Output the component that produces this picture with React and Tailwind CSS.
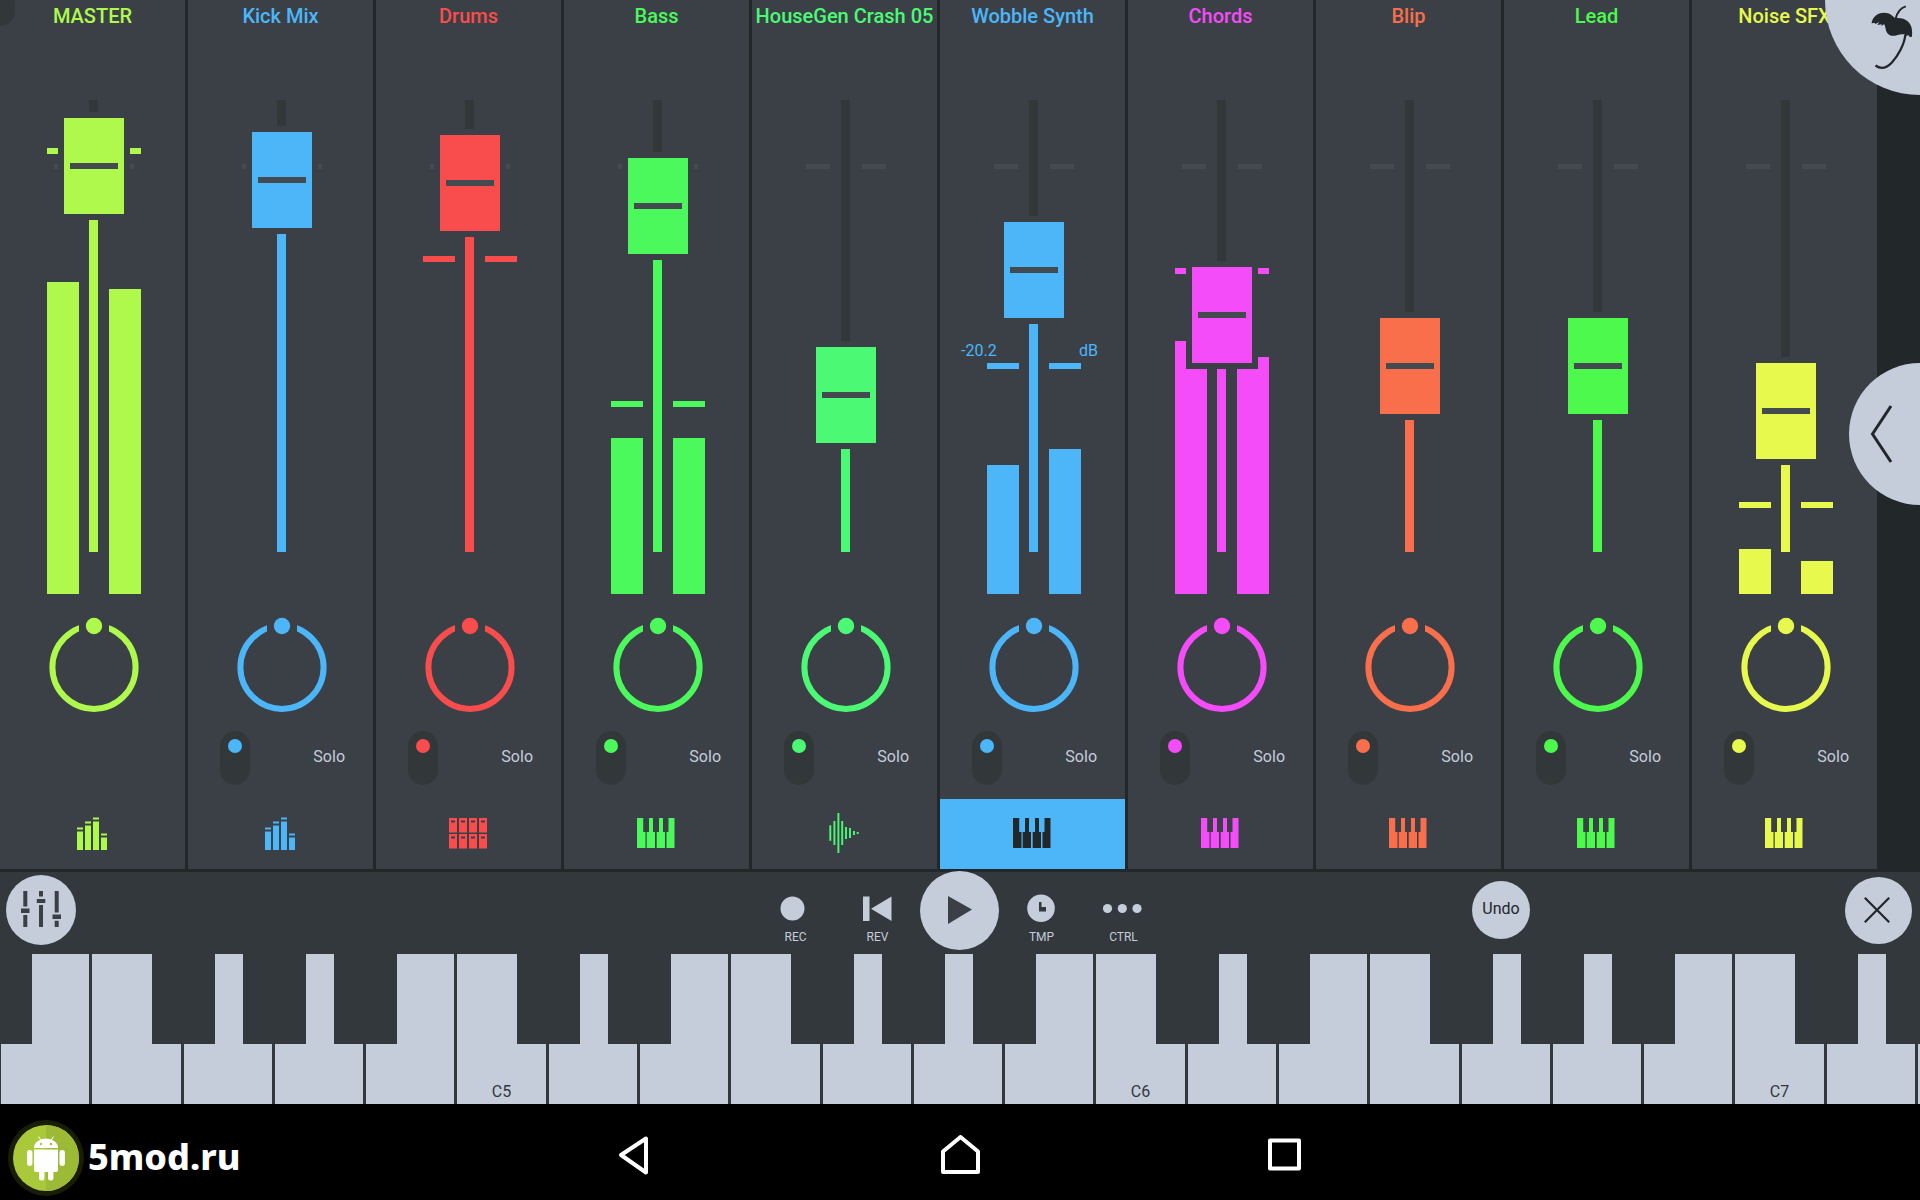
import React, { useState } from "react";

// level = fader position, peak = top of the peak marker, meters = bar heights (all in px of the fader area)
const CHANNELS = [
  { name: "MASTER", color: "text-[#aef94c]", icon: "bars", level: 386, peak: 48, meters: [312, 305], master: true },
  { name: "Kick Mix", color: "text-[#4cb6f9]", icon: "bars", level: 372 },
  { name: "Drums", color: "text-[#f94c4c]", icon: "pads", level: 369, peak: 156 },
  { name: "Bass", color: "text-[#4cf95c]", icon: "keys", level: 346, peak: 301, meters: [156, 156] },
  { name: "HouseGen Crash 05", color: "text-[#4cf975]", icon: "wave", level: 157 },
  { name: "Wobble Synth", color: "text-[#4cb6f9]", icon: "keys", level: 282, peak: 263, meters: [129, 145], db: "-20.2" },
  { name: "Chords", color: "text-[#f44cf9]", icon: "keys", level: 237, peak: 168, meters: [253, 237] },
  { name: "Blip", color: "text-[#f96f4c]", icon: "keys", level: 186 },
  { name: "Lead", color: "text-[#4cf94c]", icon: "keys", level: 186 },
  { name: "Noise SFX", color: "text-[#e6f94c]", icon: "keys", level: 141, peak: 402, meters: [45, 33] },
];

const NOTES = ["C", "D", "E", "F", "G", "A", "B"];
// E4 up to D7
const WHITE_KEYS = Array.from({ length: 21 }, (_, i) => {
  const n = i + 2;
  return { note: NOTES[n % 7], octave: 4 + Math.floor(n / 7) };
});

export default function App() {
  const [selected, setSelected] = useState("Wobble Synth");

  return (
    <div className="relative min-h-screen overflow-hidden bg-black font-[Roboto,sans-serif] text-base text-[#c5ccda]">
      <main className="relative">
        <section className="grid grid-cols-10 gap-[3px] bg-[#22272a] pr-[43px] pb-[3px]">
          {CHANNELS.map((c) => (
            <Strip key={c.name} channel={c} selected={selected === c.name} onSelect={() => setSelected(c.name)} />
          ))}
        </section>
        <div className="absolute top-0 left-0 h-[26px] w-[15px] rounded-br-full bg-[#32383a]" />
        <button aria-label="Main menu" className="absolute top-0 right-0 size-[95px] rounded-bl-full bg-[#c5ccda] text-[#22272a]">
          <PalmLogo />
        </button>
        <button aria-label="Open panel" className="absolute top-[363px] right-0 flex h-[142px] w-[71px] items-center rounded-l-full bg-[#c5ccda] pl-[21px] text-[#22272a]">
          <svg width="24" height="60" viewBox="0 0 24 60" fill="none" stroke="currentColor" strokeWidth="3"><path d="M21 2 2.500 30 21 58" /></svg>
        </button>
      </main>
      <Transport />
      <Keyboard />
      <SystemBar />
    </div>
  );
}

function Strip({ channel, selected, onSelect }) {
  const { name, color, icon, master } = channel;
  return (
    <article className={`flex min-w-0 flex-col bg-[#3b4047] ${color}`}>
      <h2 className="h-[100px] pt-0.5 text-center text-xl leading-7 font-medium whitespace-nowrap">{name}</h2>
      <div className="flex flex-col items-center pl-[3px]">
        <Fader channel={channel} />
        <Knob name={name} />
      </div>
      <div className="mt-[17px] flex h-[54px] items-center justify-between pr-7 pl-8">
        {!master && (
          <>
            <input
              type="checkbox"
              defaultChecked
              aria-label={`${name} on`}
              className="flex h-[54px] w-[30px] appearance-none justify-center rounded-full bg-[#32383a] pt-2 before:size-3.5 before:rounded-full checked:before:bg-current"
            />
            <button className="pb-[3px] leading-6 text-[#c5ccda]">Solo</button>
          </>
        )}
      </div>
      <button
        onClick={onSelect}
        aria-label={`Select ${name}`}
        className={`mt-3.5 flex h-[70px] items-center justify-center pr-[2px] pb-0.5 ${selected ? "bg-[#4cb6f9] text-[#22272a]" : ""}`}
      >
        <TrackIcon kind={icon} />
      </button>
    </article>
  );
}

function Fader({ channel }) {
  const { name, level, peak, meters, db } = channel;
  return (
    <div className="relative h-[494px] w-[94px]">
      <div className="absolute inset-x-[7px] top-16 flex justify-between">
        <span className="h-[5px] w-6 bg-[#434b51]" />
        <span className="h-[5px] w-6 bg-[#434b51]" />
      </div>
      <div className="flex h-full items-end justify-between">
        {meters?.map((h, i) => <span key={i} className="w-8 bg-current" style={{ height: h }} />)}
      </div>
      {peak && (
        <div className="absolute inset-x-0 flex justify-between" style={{ top: peak }}>
          <span className="h-1.5 w-8 bg-current" />
          <span className="h-1.5 w-8 bg-current" />
          {db && (
            <div className="absolute -right-[17px] bottom-full -left-[26px] mb-0.5 flex justify-between leading-5">
              <span>{db}</span>
              <span>dB</span>
            </div>
          )}
        </div>
      )}
      <div className="absolute top-0 left-[42px] flex h-[452px] w-[9px] items-end bg-[#32373a]">
        <span className="w-full bg-current" style={{ height: level }} />
      </div>
      <input
        type="range"
        min="0"
        max="452"
        defaultValue={level}
        aria-label={`${name} volume`}
        className="absolute -top-12 left-[17px] h-[548px] w-[60px] appearance-none bg-transparent [direction:rtl] [writing-mode:vertical-lr] [&::-webkit-slider-thumb]:h-24 [&::-webkit-slider-thumb]:w-[60px] [&::-webkit-slider-thumb]:appearance-none [&::-webkit-slider-thumb]:bg-current [&::-webkit-slider-thumb]:bg-[linear-gradient(#434b51,#434b51)] [&::-webkit-slider-thumb]:bg-[length:48px_6px] [&::-webkit-slider-thumb]:bg-center [&::-webkit-slider-thumb]:bg-no-repeat [&::-webkit-slider-thumb]:shadow-[0_0_0_6px_#3b4047]"
      />
    </div>
  );
}

function Knob({ name }) {
  return (
    <label className="relative mt-[22px] block h-[98px] w-[94px]">
      <input type="range" min="-100" max="100" defaultValue="0" aria-label={`${name} pan`} className="absolute inset-0 opacity-0" />
      <svg width="94" height="98" viewBox="0 0 94 98">
        <circle cx="47" cy="51.3" r="41.6" fill="none" stroke="currentColor" strokeWidth="6" />
        <path d="M32 4h30v20H32z" className="fill-[#3b4047]" />
        <circle cx="47" cy="10" r="8.2" fill="currentColor" />
      </svg>
    </label>
  );
}

function TrackIcon({ kind }) {
  if (kind === "bars") {
    return (
      <svg width="30" height="33" viewBox="0 0 30 33" fill="currentColor">
        <path d="M0 10.5h6v2H0zM0 14.5h6V33H0zM8 4.5h6v2H8zM8 8.5h6V33H8zM16 .5h6v2h-6zM16 4.5h6V33h-6zM24 16.5h6v2h-6zM24 20.5h6V33h-6z" />
      </svg>
    );
  }
  if (kind === "pads") {
    return (
      <svg width="38" height="31" viewBox="0 0 38 31" fill="currentColor">
        {[0, 10, 20, 30].map((x) => [0, 16].map((y) => (
          <path key={`${x}-${y}`} fillRule="evenodd" d={`M${x} ${y}h8v14.5h-8zM${x + 2} ${y + 2.5}h4v2h-4z`} />
        )))}
      </svg>
    );
  }
  if (kind === "wave") {
    return (
      <svg width="30" height="40" viewBox="0 0 30 40" stroke="currentColor" strokeWidth="1.9">
        <path d="M1.3 12.3v15.4M5.4 8v24M9.4 0v40M13.2 8v24M17 14v12M21 15v10M25 18v4M28.7 19v2" />
      </svg>
    );
  }
  return (
    <svg width="38" height="30" viewBox="0 0 38 30" fill="currentColor">
      <path d="M0 0h6.2v14h2.3v16H0zM12 0h4v14h2v16H9.7V14H12zM22 0h4v14h2v16h-8.3V14H22zM31.5 0h6v30h-8V14h2z" />
    </svg>
  );
}

function PalmLogo() {
  return (
    <svg width="95" height="95" viewBox="5 0 95 95">
      <path
        fill="currentColor"
        d="M51.5 23.3c.8-4 2.500-6.600 5-8.300 4.500-2.800 10.500-3 15.200.3l3.600 3c4-.8 9.500.3 12.600 3.200 4 3.800 4.600 8.700 4.100 15.200l-2.300.2-1.400-2-1.800 1.200-1.500-1.400c-4-1.200-6.500.2-10 1-3.300.3-6-.2-7.800-2.700-1.900-2.600-1.400-6.300-3-8.800-1.400.3-1.400 1.500-3 1.500l.6-1.500-4.500.8 1.900-3-3.700 2-.6-1.100z"
      />
      <path fill="none" stroke="currentColor" strokeWidth="2" d="M75.500 19c1.500-6 5-11 10.300-12.600" />
      <path fill="none" stroke="currentColor" strokeWidth="2.300" d="M85.300 35C84.500 44 78 56 71.700 62.700c-5.200 5.300-10.700 7-16.200 2.800" />
    </svg>
  );
}

function TransportButton({ label, children }) {
  return (
    <button className="flex w-[82px] flex-col items-center gap-1 pt-[18px] pl-px text-xs leading-4">
      <svg className="overflow-visible" width="32" height="32" viewBox="0 0 32 32" fill="currentColor">{children}</svg>
      {label}
    </button>
  );
}

function Transport() {
  return (
    <header className="relative flex h-[82px] items-center bg-[#32383b] pb-1.5">
      <div className="flex flex-1 pl-1.5">
        <button aria-label="Mixer" className="flex size-[70px] items-center justify-center rounded-full bg-[#c5ccda] pb-0.5 text-[#3b4047]">
          <svg width="40" height="36" viewBox="0 0 40 36" fill="currentColor">
            <path d="M2.300 0h4v15.500h-4zM2.300 24h4v12h-4zM0 17.500h8.500v4.500H0zM18 0h4v5.500h-4zM18 14h4v22h-4zM15.800 8h8.500v4h-8.500zM33.700 0h4v21.500h-4zM33.700 29.700h4V36h-4zM31.500 23.500H40V28h-8.500z" />
          </svg>
        </button>
      </div>

      <div className="flex items-center">
        <TransportButton label="REC"><circle cx="12.5" cy="15.500" r="12" /></TransportButton>
        <TransportButton label="REV"><path d="M1 3.500h6.500V28H1zM29.500 3.500V28L9 15.700z" /></TransportButton>
        <div className="flex w-[82px] justify-center">
          <button aria-label="Play" className="-my-3 flex size-[79px] items-center justify-center rounded-full bg-[#c5ccda] pb-px pl-0.5 text-[#3b4047]">
            <svg width="24" height="28" viewBox="0 0 24 28" fill="currentColor"><path d="M0 0v28l24-14.500z" /></svg>
          </button>
        </div>
        <TransportButton label="TMP">
          <path fillRule="evenodd" d="M15 1.500a13.800 13.800 0 1 1 0 27.600 13.800 13.800 0 0 1 0-27.600zM13 9v9.500h7V14h-4.500V9z" />
        </TransportButton>
        <TransportButton label="CTRL">
          <circle cx="-.5" cy="15.500" r="4.600" />
          <circle cx="14.300" cy="15.500" r="4.600" />
          <circle cx="29" cy="15.500" r="4.600" />
        </TransportButton>
      </div>

      <div className="flex flex-1 items-center justify-end gap-[315px] pr-2">
        <button className="size-[58px] rounded-full bg-[#c5ccda] pb-[3px] leading-6 text-[#22272a]">Undo</button>
        <button aria-label="Close" className="flex size-[67px] items-center justify-center rounded-full bg-[#c5ccda] pr-[3px] pb-px text-[#22272a]">
          <svg width="26" height="26" viewBox="0 0 26 26" fill="none" stroke="currentColor" strokeWidth="2.200"><path d="M.8.800l24.400 24.400M25.200.800.8 25.200" /></svg>
        </button>
      </div>
    </header>
  );
}

function Keyboard() {
  return (
    <section className="relative flex h-[150px] overflow-hidden bg-[#32383b] pl-px">
      <button aria-label="D#4" className="absolute top-0 left-0 z-10 h-[90px] w-8 bg-[#32383b]" />
      {WHITE_KEYS.map(({ note, octave }) => (
        <div key={note + octave} className="relative mr-[3px] flex flex-1">
          <button aria-label={note + octave} className="flex flex-1 items-end justify-center bg-[#c5ccda] pb-0.5 leading-5 text-[#32383b]">
            {note === "C" && note + octave}
          </button>
          {note !== "E" && note !== "B" && (
            <button aria-label={`${note}#${octave}`} className="absolute top-0 -right-[34px] z-10 h-[90px] w-[63px] bg-[#32383b]" />
          )}
        </div>
      ))}
      <span className="w-0.5 bg-[#c5ccda]" />
    </section>
  );
}

function SystemBar() {
  return (
    <footer className="flex h-24 items-center text-white">
      <div className="flex flex-1 items-center pt-3 pl-2">
        <AndroidLogo />
        <span className="pb-0.5 pl-1 font-['Noto_Sans',sans-serif] text-[36px] leading-[40px] font-extrabold">5mod.ru</span>
      </div>
      <nav className="flex gap-[284px] pt-1.5">
        <button aria-label="Back"><svg width="40" height="40" viewBox="0 0 40 40" fill="none" stroke="currentColor" strokeWidth="4" strokeLinejoin="round"><path d="M5 20 30 3.500v34z" /></svg></button>
        <button aria-label="Home"><svg width="40" height="40" viewBox="0 0 40 40" fill="none" stroke="currentColor" strokeWidth="4" strokeLinejoin="round"><path d="M20.500 2 38 16.500V37H3V16.500z" /></svg></button>
        <button aria-label="Recent apps"><svg width="40" height="40" viewBox="0 0 40 40" fill="none" stroke="currentColor" strokeWidth="4" strokeLinejoin="round"><path d="M6 5.500h29v28H6z" /></svg></button>
      </nav>
      <div className="flex-1 pr-2" />
    </footer>
  );
}

function AndroidLogo() {
  return (
    <svg width="76" height="76" viewBox="0 0 76 76">
      <circle cx="38" cy="38" r="38" fill="#191d08" />
      <circle cx="38" cy="38" r="33" fill="#a9c93a" />
      <path d="M38 5a33 33 0 0 1 0 66z" fill="#9cba36" />
      <g fill="#fff">
        <path d="M26 28a12 9.500 0 0 1 24 0zM26 29.500h24V50a2 2 0 0 1-2 2H28a2 2 0 0 1-2-2z" />
        <rect x="19" y="30" width="5.400" height="16" rx="2.700" />
        <rect x="51.500" y="30" width="5.400" height="16" rx="2.700" />
        <rect x="31" y="46" width="5.400" height="14.500" rx="2.500" />
        <rect x="40" y="46" width="5.400" height="14.500" rx="2.500" />
      </g>
      <path d="M30.500 16.500l2.500 4M45.500 16.500l-2.500 4" stroke="#fff" />
      <circle cx="33" cy="24" r="1.200" fill="#a9c93a" />
      <circle cx="43" cy="24" r="1.200" fill="#9cba36" />
    </svg>
  );
}
